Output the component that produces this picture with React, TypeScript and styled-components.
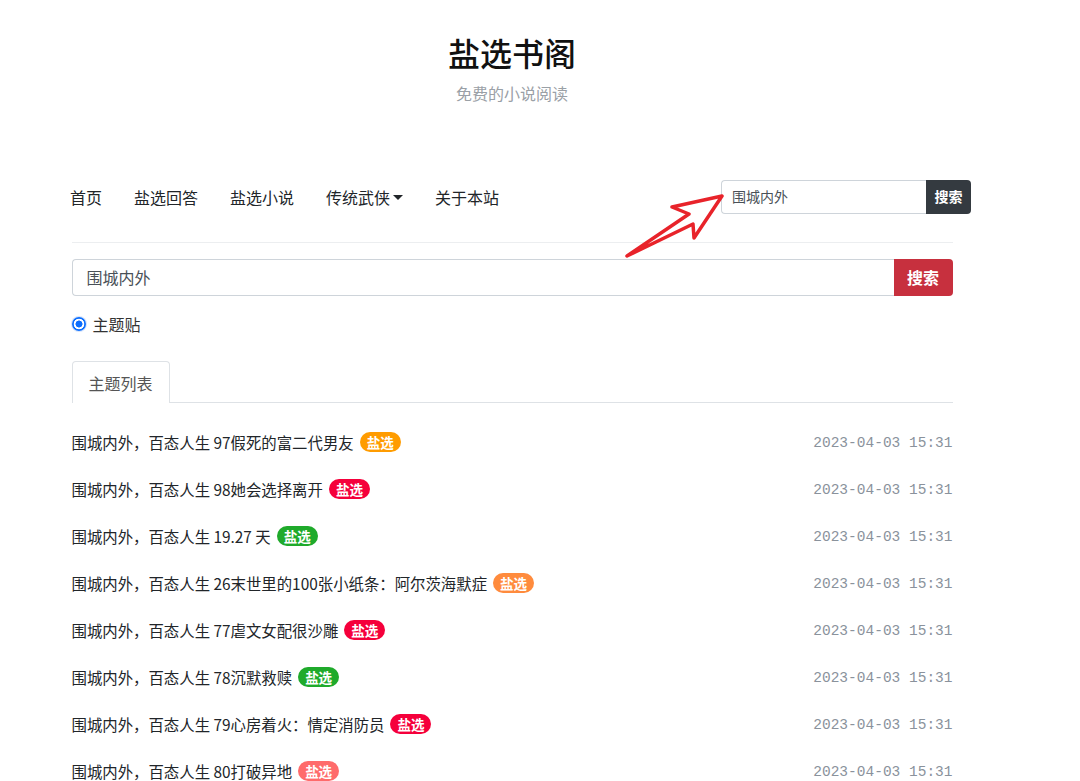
import React from "react";
import styled, { createGlobalStyle } from "styled-components";

const GlobalStyle = createGlobalStyle`
  body {
    margin: 0;
    background: #fff;
    font-family: "Noto Sans CJK SC", "Noto Sans", sans-serif;
    color: #212529;
  }
`;

const Page = styled.div`
  position: relative;
  width: 1024px;
  min-height: 781px;
  overflow: hidden;
`;

const Header = styled.header`
  padding-top: 30px;
  text-align: center;
`;

const SiteTitle = styled.h1`
  margin: 0;
  font-size: 32px;
  line-height: 44px;
  font-weight: 500;
  color: #111;
`;

const SiteSub = styled.div`
  margin-top: 8px;
  font-size: 16px;
  line-height: 22px;
  color: #9aa0a6;
`;

const NavBar = styled.nav`
  margin: 76px 53px 0 70px;
  height: 34px;
  display: flex;
  align-items: center;
  justify-content: space-between;
`;

const NavLinks = styled.div`
  display: flex;
  align-items: center;
  gap: 32px;
`;

const NavLink = styled.a`
  font-size: 16px;
  color: #212529;
  text-decoration: none;
  display: flex;
  align-items: center;
`;

const Caret = styled.span`
  margin-left: 3px;
  border-top: 5px solid #212529;
  border-left: 5px solid transparent;
  border-right: 5px solid transparent;
`;

const SearchGroup = styled.form<{ $height: number }>`
  display: flex;
  height: ${(p) => p.$height}px;
`;

const SearchInput = styled.div<{ $size: number; $pad: number }>`
  flex: 1;
  box-sizing: border-box;
  border: 1px solid #ced4da;
  border-right: none;
  border-radius: 4px 0 0 4px;
  display: flex;
  align-items: center;
  padding-left: ${(p) => p.$pad}px;
  padding-bottom: 2px;
  font-size: ${(p) => p.$size}px;
  color: #495057;
`;

const SearchButton = styled.button<{ $bg: string; $size: number; $width: number }>`
  width: ${(p) => p.$width}px;
  border: none;
  border-radius: 0 4px 4px 0;
  background: ${(p) => p.$bg};
  color: #fff;
  font-family: inherit;
  font-size: ${(p) => p.$size}px;
  font-weight: 700;
  padding: 0 0 2px;
`;

const Main = styled.main`
  width: 881px;
  margin: 0 auto;
`;

const Rule = styled.hr`
  margin: 28px 0 0;
  border: none;
  border-top: 1px solid #eceef0;
`;

const MainSearch = styled.div`
  margin-top: 16px;
`;

const RadioRow = styled.label`
  margin-top: 16px;
  display: flex;
  align-items: center;
  height: 24px;
  font-size: 16px;
  color: #333;
`;

const Radio = styled.span`
  width: 14px;
  height: 14px;
  margin: 0 7px 0 0;
  border-radius: 50%;
  background: radial-gradient(circle, #0d6efd 0 3.2px, #fff 3.8px 5px, #0d6efd 5.6px);
  box-shadow: 0 0 0 1px #d6e4fb;
`;

const Tabs = styled.div`
  margin-top: 25px;
  display: flex;
  border-bottom: 1px solid #dee2e6;
`;

const Tab = styled.div`
  width: 98px;
  height: 42px;
  box-sizing: border-box;
  border: 1px solid #dee2e6;
  border-bottom: none;
  border-radius: 4px 4px 0 0;
  margin-bottom: -1px;
  background: #fff;
  display: flex;
  align-items: center;
  justify-content: center;
  font-size: 16px;
  color: #555;
`;

const List = styled.ul`
  list-style: none;
  margin: 15px 0 0;
  padding: 0;
`;

const Row = styled.li`
  height: 47px;
  display: flex;
  align-items: center;
  justify-content: space-between;
`;

const RowTitle = styled.span`
  display: flex;
  align-items: center;
  font-size: 15.4px;
  color: #212529;
`;

const Badge = styled.span<{ $color: string }>`
  margin-left: 6px;
  height: 20px;
  padding: 0 7px;
  border-radius: 10px;
  background: ${(p) => p.$color};
  color: #fff;
  font-size: 13.5px;
  font-weight: 700;
  line-height: 20px;
`;

const RowDate = styled.span`
  font-family: "Liberation Mono", "DejaVu Sans Mono", monospace;
  font-size: 14.5px;
  color: #8a929c;
  padding-top: 2px;
`;

const Pointer = styled.svg`
  position: absolute;
  left: 0;
  top: 0;
  pointer-events: none;
`;

const items = [
  { title: "围城内外，百态人生 97假死的富二代男友", color: "#ff9c00" },
  { title: "围城内外，百态人生 98她会选择离开", color: "#f5003b" },
  { title: "围城内外，百态人生 19.27 天", color: "#1faa2b" },
  { title: "围城内外，百态人生 26末世里的100张小纸条：阿尔茨海默症", color: "#ff8b3d" },
  { title: "围城内外，百态人生 77虐文女配很沙雕", color: "#f5003b" },
  { title: "围城内外，百态人生 78沉默救赎", color: "#1faa2b" },
  { title: "围城内外，百态人生 79心房着火：情定消防员", color: "#f5003b" },
  { title: "围城内外，百态人生 80打破异地", color: "#ff6b6b" },
];

export default function App() {
  return (
    <Page>
      <GlobalStyle />
      <Header>
        <SiteTitle>盐选书阁</SiteTitle>
        <SiteSub>免费的小说阅读</SiteSub>
      </Header>

      <NavBar>
        <NavLinks>
          <NavLink>首页</NavLink>
          <NavLink>盐选回答</NavLink>
          <NavLink>盐选小说</NavLink>
          <NavLink>
            传统武侠
            <Caret />
          </NavLink>
          <NavLink>关于本站</NavLink>
        </NavLinks>
        <SearchGroup $height={34} style={{ width: 250 }}>
          <SearchInput $size={14} $pad={10}>围城内外</SearchInput>
          <SearchButton type="button" $bg="#343a40" $size={14} $width={45}>
            搜索
          </SearchButton>
        </SearchGroup>
      </NavBar>

      <Main>
        <Rule />
        <MainSearch>
          <SearchGroup $height={37}>
            <SearchInput $size={16} $pad={14}>围城内外</SearchInput>
            <SearchButton type="button" $bg="#c7303e" $size={16} $width={59}>
              搜索
            </SearchButton>
          </SearchGroup>
        </MainSearch>

        <RadioRow>
          <Radio />
          主题贴
        </RadioRow>

        <Tabs>
          <Tab>主题列表</Tab>
        </Tabs>

        <List>
          {items.map((it, i) => (
            <Row key={i}>
              <RowTitle>
                {it.title}
                <Badge $color={it.color}>盐选</Badge>
              </RowTitle>
              <RowDate>2023-04-03 15:31</RowDate>
            </Row>
          ))}
        </List>
      </Main>

      <Pointer width="1024" height="781" viewBox="0 0 1024 781">
        <polygon
          points="722,196 672,207 689,214 627,256 693,224 694,238"
          fill="#fff"
          stroke="#e8232a"
          strokeWidth="3.5"
          strokeLinejoin="round"
        />
      </Pointer>
    </Page>
  );
}
